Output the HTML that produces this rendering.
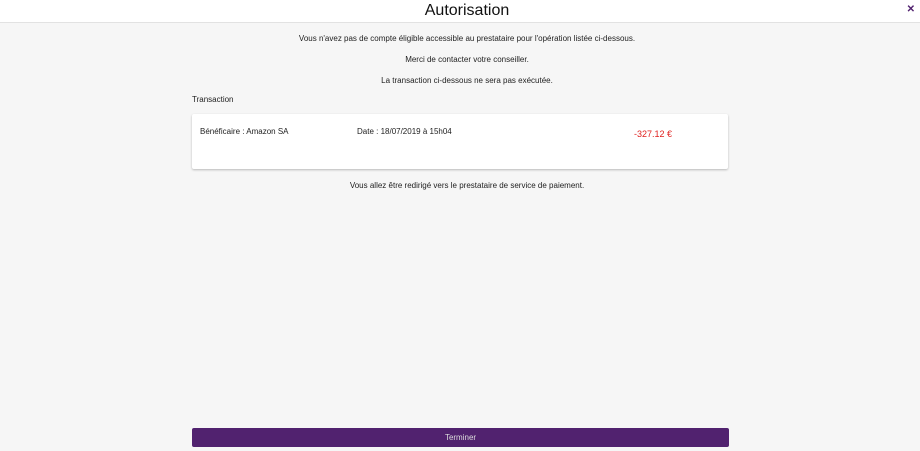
<!DOCTYPE html>
<html><head><meta charset="utf-8"><style>
*{margin:0;padding:0;box-sizing:border-box}
body{width:920px;height:451px;background:#f6f6f6;font-family:"Liberation Sans",sans-serif;color:#222;position:relative;overflow:hidden;font-size:8px}
.hdr{position:absolute;left:0;top:0;width:920px;height:23px;background:#fff;border-bottom:1px solid #e2e2e2}
.hdr h1{position:absolute;left:0;width:934px;text-align:center;top:2px;font-size:16px;font-weight:normal;color:#111}
.x{position:absolute;right:5px;top:4px;font-size:10px;color:#51226f;font-weight:bold}
.t{position:absolute;left:0;width:934px;text-align:center}
.card{position:absolute;left:192px;top:114px;width:536px;height:55px;background:#fff;box-shadow:0 1px 2px rgba(0,0,0,.25);border-radius:2px}
.btn{position:absolute;left:192px;top:428px;width:537px;height:19px;background:#51226f;border-radius:2px;color:#ddd;text-align:center;line-height:19px}
</style></head><body>
<div class="hdr"><h1>Autorisation</h1><div class="x">✕</div></div>
<div class="t" style="top:34px">Vous n'avez pas de compte éligible accessible au prestataire pour l'opération listée ci-dessous.</div>
<div class="t" style="top:55px">Merci de contacter votre conseiller.</div>
<div class="t" style="top:76px">La transaction ci-dessous ne sera pas exécutée.</div>
<div style="position:absolute;left:192px;top:95px">Transaction</div>
<div class="card">
<div style="position:absolute;left:8px;top:13px">Bénéficaire : Amazon SA</div>
<div style="position:absolute;left:165px;top:13px">Date : 18/07/2019 à 15h04</div>
<div style="position:absolute;left:442px;top:15px;color:#e0201e;font-size:9px">-327.12 €</div>
</div>
<div class="t" style="top:181px">Vous allez être redirigé vers le prestataire de service de paiement.</div>
<div class="btn">Terminer</div>
</body></html>
